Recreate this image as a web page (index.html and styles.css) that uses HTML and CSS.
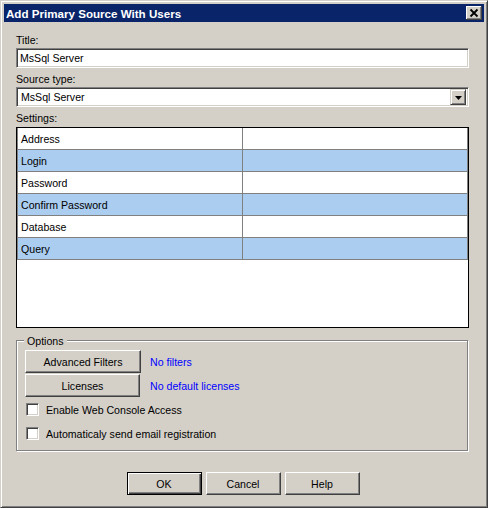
FILE: index.html
```html
<!DOCTYPE html>
<html>
<head>
<meta charset="utf-8">
<link rel="stylesheet" href="styles.css">
</head>
<body>
<div class="window">
  <div class="titlebar">
    <span class="title">Add Primary Source With Users</span>
    <span class="close"><svg width="16" height="14" viewBox="0 0 16 14"><path d="M4.5 3.5 L11.5 10.5 M11.5 3.5 L4.5 10.5" stroke="#000" stroke-width="1.8" fill="none"/></svg></span>
  </div>
  <div class="content">
    <div class="lbl first">Title:</div>
    <div class="field">MsSql Server</div>
    <div class="lbl">Source type:</div>
    <div class="field combo"><span class="combo-text">MsSql Server</span><span class="drop"><svg width="7" height="4" viewBox="0 0 7 4"><path d="M0 0 H7 L3.5 4 Z" fill="#000"/></svg></span></div>
    <div class="lbl">Settings:</div>
    <div class="grid">
      <div class="row"><div class="c1">Address</div><div class="c2"></div></div>
      <div class="row alt"><div class="c1">Login</div><div class="c2"></div></div>
      <div class="row"><div class="c1">Password</div><div class="c2"></div></div>
      <div class="row alt"><div class="c1">Confirm Password</div><div class="c2"></div></div>
      <div class="row"><div class="c1">Database</div><div class="c2"></div></div>
      <div class="row alt"><div class="c1">Query</div><div class="c2"></div></div>
    </div>
    <div class="group">
      <span class="legend">Options</span>
      <div class="optrow"><span class="btn wide">Advanced Filters</span><span class="link">No filters</span></div>
      <div class="optrow second"><span class="btn lic">Licenses</span><span class="link">No default licenses</span></div>
      <div class="check c-first"><span class="box"></span><span class="check-label">Enable Web Console Access</span></div>
      <div class="check c-second"><span class="box"></span><span class="check-label">Automaticaly send email registration</span></div>
    </div>
    <div class="buttons">
      <span class="btn dlg default">OK</span>
      <span class="btn dlg">Cancel</span>
      <span class="btn dlg">Help</span>
    </div>
  </div>
</div>
</body>
</html>
```
FILE: styles.css
```css
html, body {
  margin: 0;
  padding: 0;
  background: #d4d0c8;
}
body {
  font-family: "Liberation Sans", Arial, sans-serif;
  font-size: 10.6px;
  color: #000;
}
.window {
  width: 488px;
  height: 508px;
  box-sizing: border-box;
  border: 1px solid;
  border-color: #d4d0c8 #404040 #404040 #d4d0c8;
  box-shadow: inset 1px 1px 0 #fff, inset -1px -1px 0 #808080;
  padding: 3px;
  background: #d4d0c8;
  display: flex;
  flex-direction: column;
}
.titlebar {
  height: 18px;
  background: #0a246a;
  display: flex;
  align-items: center;
  justify-content: space-between;
  padding: 0 2px 0 2px;
}
.title {
  color: #fff;
  font-weight: bold;
  font-size: 11.6px;
  padding-top: 1px;
}
.close {
  width: 16px;
  height: 14px;
  box-sizing: border-box;
  background: #d4d0c8;
  box-shadow: inset -1px -1px 0 #404040, inset 1px 1px 0 #fff, inset -2px -2px 0 #808080;
  display: flex;
}
.content {
  padding: 0 15px 0 12px;
  display: flex;
  flex-direction: column;
}
.lbl {
  height: 13px;
  line-height: 14px;
  margin-top: 4px;
}
.lbl.first {
  margin-top: 11px;
}
.field {
  margin-top: 2px;
  height: 20px;
  box-sizing: border-box;
  background: #fff;
  border: 1px solid;
  border-color: #808080 #fff #fff #808080;
  box-shadow: inset 1px 1px 0 #404040, inset -1px -1px 0 #d4d0c8;
  padding: 0 0 0 3px;
  line-height: 19px;
}
.combo {
  display: flex;
  align-items: center;
  justify-content: space-between;
  padding: 0 2px 0 4px;
}
.combo-text {
  padding-top: 1px;
}
.drop {
  width: 16px;
  height: 16px;
  box-sizing: border-box;
  background: #d4d0c8;
  border: 1px solid;
  border-color: #d4d0c8 #404040 #404040 #d4d0c8;
  box-shadow: inset 1px 1px 0 #fff, inset -1px -1px 0 #808080;
  display: flex;
  align-items: center;
  justify-content: center;
}
.drop svg {
  display: block;
  margin-top: 1px;
}
.grid {
  margin-top: 3px;
  height: 201px;
  box-sizing: border-box;
  background: #fff;
  border: 1px solid #000;
}
.row {
  height: 22px;
  box-sizing: border-box;
  display: flex;
  border-left: 1px solid #808080;
  border-right: 1px solid #808080;
  border-bottom: 1px solid #808080;
}
.row.alt {
  background: #abcdef;
}
.c1 {
  width: 225px;
  box-sizing: border-box;
  border-right: 1px solid #808080;
  padding-left: 3px;
  line-height: 23px;
}
.c2 {
  flex: 1;
}
.group {
  position: relative;
  margin-top: 12px;
  width: 452px;
  height: 111px;
  box-sizing: border-box;
  border: 1px solid #808080;
  box-shadow: 1px 1px 0 #fff, inset 1px 1px 0 #fff;
  padding: 9px 0 0 8px;
}
.legend {
  position: absolute;
  top: -7px;
  left: 7px;
  padding: 0 3px;
  background: #d4d0c8;
  line-height: 14px;
}
.optrow {
  display: flex;
  align-items: center;
  height: 23px;
}
.optrow.second {
  margin-top: 1px;
}
.btn {
  display: flex;
  align-items: center;
  justify-content: center;
  height: 23px;
  box-sizing: border-box;
  background: #d4d0c8;
  border: 1px solid;
  border-color: #fff #404040 #404040 #fff;
  box-shadow: inset -1px -1px 0 #808080;
  padding-top: 1px;
}
.btn.wide {
  width: 116px;
}
.btn.lic {
  width: 115px;
}
.link {
  color: #0000ff;
  margin-left: 9px;
  padding-top: 1px;
}
.optrow.second .link {
  margin-left: 10px;
}
.check {
  display: flex;
  align-items: center;
  height: 13px;
  padding-left: 1px;
}
.c-first {
  margin-top: 6px;
}
.c-second {
  margin-top: 11px;
}
.box {
  width: 13px;
  height: 13px;
  box-sizing: border-box;
  background: #fff;
  border: 1px solid;
  border-color: #808080 #fff #fff #808080;
  box-shadow: inset 1px 1px 0 #404040, inset -1px -1px 0 #d4d0c8;
}
.check-label {
  margin-left: 7px;
  padding-top: 1px;
}
.buttons {
  margin-top: 21px;
  display: flex;
  justify-content: center;
  gap: 4px;
  padding-left: 1px;
}
.btn.dlg {
  width: 75px;
}
.btn.default {
  border: 1px solid #000;
  box-shadow: inset 1px 1px 0 #fff, inset -1px -1px 0 #404040, inset -2px -2px 0 #808080;
}
```
